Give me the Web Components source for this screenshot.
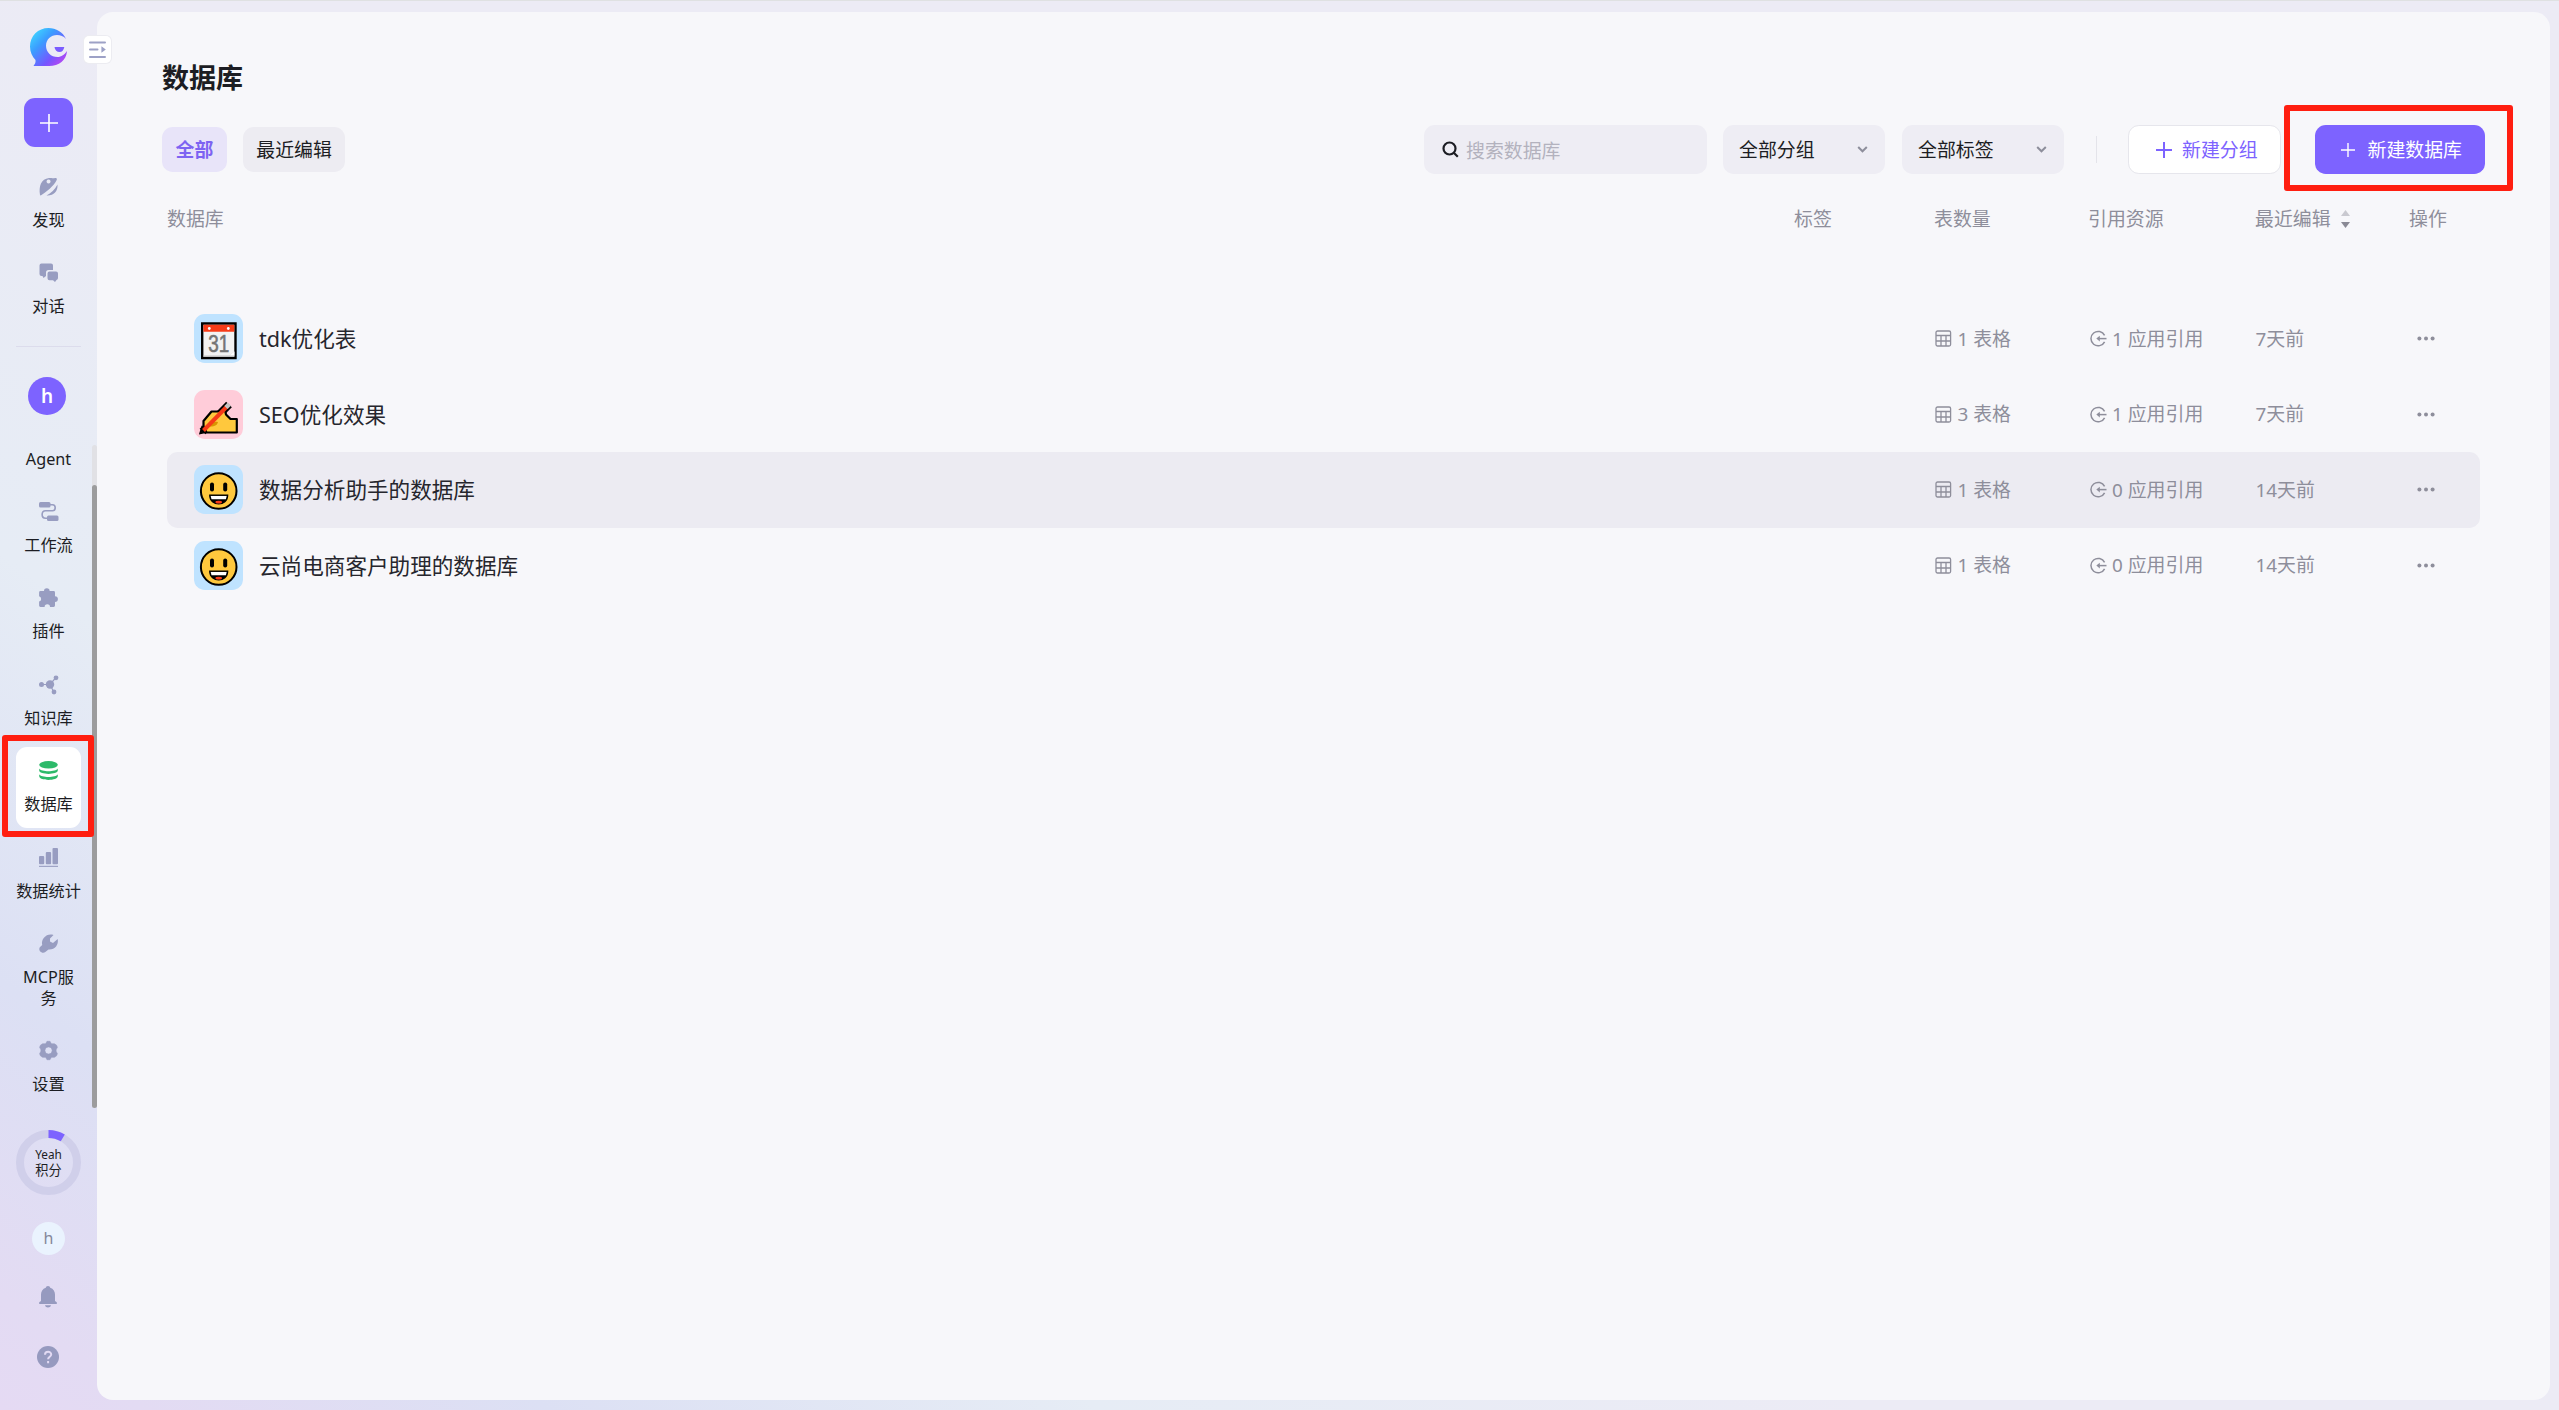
<!DOCTYPE html>
<html lang="zh-CN">
<head>
<meta charset="UTF-8">
<title>数据库</title>
<style>
  html, body {
    margin: 0;
    height: 100%;
    overflow: hidden;
    background: #ecebf5;
    color: #1c1d23;
    font-family: "Noto Sans", "Noto Sans CJK SC", sans-serif;
    font-size: 18.9px;
  }
</style>
</head>
<body>
<app-shell>
  <side-bar slot="side"></side-bar>
  <database-page></database-page>
</app-shell>

<script>
const icons = {
  explore: '<path fill-rule="evenodd" d="M1 18C-.3 9 2 2 10 1c3 0 4 .4 6 0 1.500-.4 2.300.4 1.700 2C15 9 7 15 2.500 18 2 18.500 1.200 18.600 1 18zM9.500 2.500a2 2 0 1 0 .1 0z"/><path d="M18.500 7.500c.5 7-4 11.500-11 11C12 16 16 12.500 18.500 7.500z"/>',
  chat: '<path d="M2.500.5h9.500a2 2 0 0 1 2 2V7H9.500A2.500 2.500 0 0 0 7 9.500V13l-2.500 2-1-2H2.500a2 2 0 0 1-2-2V2.500a2 2 0 0 1 2-2z"/><path d="M10.500 8.500H17a2 2 0 0 1 2 2V15a2 2 0 0 1-1.500 2L16 19l-2-1.700h-3.500a2 2 0 0 1-2-2v-4.800a2 2 0 0 1 2-2z"/>',
  flow: '<rect x="0" y="0" width="11.500" height="5.500" rx="1.500"/><rect x="8" y="13.500" width="11.500" height="5.500" rx="1.500"/><path d="M11 2.700h2.500c3.600 0 3.600 6 0 6h-7c-4.500 0-4.500 7.500 0 7.500H9" fill="none" stroke="currentColor" stroke-width="1.600"/>',
  plugin: '<path d="M1.500 3H5a2.800 2.800 0 0 1 5.600 0h4a1.400 1.400 0 0 1 1.400 1.400v3.800a2.900 2.900 0 0 1 0 5.800v3.600a1.400 1.400 0 0 1-1.400 1.400H11a2.700 2.700 0 0 0-5.400 0H1.500A1.400 1.400 0 0 1 .1 17.600v-4a2.800 2.800 0 0 0 0-5.400V4.400A1.400 1.400 0 0 1 1.500 3z"/>',
  knowledge: '<circle cx="2.500" cy="9.500" r="2.500"/><circle cx="11" cy="9.500" r="4.200"/><circle cx="17" cy="2.800" r="2.400"/><circle cx="15" cy="17" r="2.400"/><path d="M2 9.500h9l6-7M11 9.500l4 8" fill="none" stroke="currentColor" stroke-width="1.200"/>',
  database: '<ellipse cx="9.500" cy="3.800" rx="9.300" ry="3.700"/><path d="M.2 7.600c2 3.600 16.600 3.600 18.600 0v2C18.800 14 .2 14 .2 9.600zM.2 13.200c2 3.600 16.600 3.600 18.600 0v1.800c0 5.200-18.600 5.200-18.600 0z"/>',
  stats: '<rect x="0" y="8" width="5.200" height="8.300" rx="1"/><rect x="6.800" y="4" width="5.300" height="12.300" rx="1"/><rect x="13.500" y="0" width="5.500" height="16.300" rx="1"/><rect x="0" y="17.800" width="19" height="1.100"/>',
  wrench: '<path d="M14.500.9 11 4.600v3l3 1.400 4.700-4c1.200 6-3 11-9.200 10.500L6.300 18c-2.500 2.300-7.600-.9-5.500-4.800L3.200 11C1.800 4.500 8-1.300 14.500.9z"/>',
  gear: '<path fill-rule="evenodd" d="M8 .3h3l1.400 2.500h3L17.400 4l1 2.200-1.300 2.600v1.400l1.300 2.600-1 2.200-2 1.300h-3L11 18.700H8l-1.400-2.400h-3L1.600 15l-1-2.200 1.300-2.600V8.800L.6 6.200 1.600 4l2-1.200h3zM9.500 5.900a3.600 3.600 0 1 0 .1 0z" stroke="currentColor" stroke-linejoin="round" stroke-width=".6"/>'
};

function svg(body, size, box) {
  return `<svg width="${size}" height="${size}" viewBox="0 0 ${box || 19} ${box || 19}" fill="currentColor">${body}</svg>`;
}

// every component renders its own markup and styles in an open root
class BaseElement extends HTMLElement {
  connectedCallback() {
    const root = this.attachShadow({ mode: 'open' });
    root.innerHTML = this.render();
  }
}

class AppShell extends BaseElement {
  render() {
    return `
      <style>
        :host {
          display: grid;
          grid-template-columns: 97px 1fr;
          height: 1410px;
          box-sizing: border-box;
          border-top: 1px solid #dfe1e2;
          padding: 0 9px 0 0;
          background: linear-gradient(38deg, #e5daf3 0, #e3dbf3 90px, #dce0f4 339px, #e6ecf5 677px, #ecebf5 1150px);
        }
        main {
          background: #f7f7fa;
          border-radius: 16px;
          margin: 11px 0 10px;
          min-width: 0;
        }
      </style>
      <slot name="side"></slot>
      <main><slot></slot></main>`;
  }
}

class NavItem extends BaseElement {
  render() {
    const name = this.getAttribute('icon');
    return `
      <style>
        :host {
          display: flex;
          flex-direction: column;
          align-items: center;
          box-sizing: border-box;
          width: 65px;
          min-height: 81px;
          padding-top: 14px;
          margin-bottom: 5.4px;
          border-radius: 11px;
          color: #989dc1;
          flex: none;
        }
        :host([active]) { background: #fff; color: #2dba6a; }
        .label {
          margin: 14px 0 12px;
          width: 52px;
          font-size: 16.2px;
          line-height: 21.4px;
          color: #1c1d23;
          text-align: center;
        }
        .label.wide { width: 66px; white-space: nowrap; }
        svg, i { display: block; width: 19px; height: 19px; overflow: visible; }
      </style>
      ${name ? svg(icons[name], 19) : '<i></i>'}
      <div class="label ${this.hasAttribute('wide') ? 'wide' : ''}"><slot></slot></div>`;
  }
}

class SideBar extends BaseElement {
  render() {
    return `
      <style>
        :host {
          display: flex;
          flex-direction: column;
          align-items: center;
          position: relative;
          height: 1409px;
          width: 97px;
        }
        .logo { display: block; margin: 27px 0 0; }
        .add {
          display: grid;
          place-items: center;
          width: 49px;
          height: 49px;
          margin: 32px 0 16px;
          border-radius: 11px;
          background: #7d63ff;
        }
        .line { width: 65px; height: 1px; background: #dcdcec; margin: 10px 0 30px; flex: none; }
        .team {
          display: grid;
          place-items: center;
          width: 38px;
          height: 38px;
          margin: 0 3px 30px 0;
          border-radius: 50%;
          background: #7d63ff;
          color: #fff;
          font-size: 19px;
          font-weight: 600;
          flex: none;
        }
        .scroll {
          display: flex;
          justify-content: center;
          position: relative;
          width: 97px;
          height: 663px;
          overflow: hidden;
          flex: none;
        }
        .list { display: flex; flex-direction: column; margin-top: -43.200px; }
        .track { position: absolute; right: 0; top: 0; width: 5px; height: 663px; border-radius: 3px; background: #e1e1e5; }
        .thumb { margin-top: 40px; height: 623px; border-radius: 3px; background: #9c9c9d; }
        .ring {
          display: grid;
          place-items: center;
          position: relative;
          width: 65px;
          height: 65px;
          margin-top: 22px;
          flex: none;
        }
        .ring > * { grid-area: 1 / 1; }
        .points {
          display: flex;
          flex-direction: column;
          align-items: center;
          gap: 4px;
          font-size: 13.2px;
          line-height: 13px;
        }
        .points span:first-child { font-size: 11.800px; line-height: 12px; }
        .user {
          display: grid;
          place-items: center;
          width: 33px;
          height: 33px;
          margin: 27px 0 31px;
          border-radius: 50%;
          background: #eaf3fe;
          color: #85889a;
          font-size: 16px;
          flex: none;
        }
        .foot { display: block; margin-right: 1px; color: #969abf; flex: none; }
        .toggle {
          position: absolute;
          left: 84px;
          top: 35px;
          width: 27px;
          height: 27px;
          border-radius: 5px;
          background: #fff;
          box-shadow: 0 0 0 1px #ececf1;
          z-index: 2;
        }
        .mark {
          position: absolute;
          left: 1.500px;
          top: 734px;
          width: 92.500px;
          height: 102px;
          box-sizing: border-box;
          border: 6px solid #ff1e10;
          border-radius: 3px;
          z-index: 3;
        }
      </style>
      <svg class="logo" width="37" height="38" viewBox="0 0 37 38">
        <defs>
          <linearGradient id="g" x1="0" y1="0" x2="1" y2="1">
            <stop offset=".1" stop-color="#3fd3ff"/><stop offset=".35" stop-color="#3b9dff"/>
            <stop offset=".68" stop-color="#7655ff"/><stop offset=".85" stop-color="#a84bf5"/>
          </linearGradient>
        </defs>
        <path fill="url(#g)" d="M36 11C33 4 26 0 18.500 0 8 0 0 8 0 18.500c0 5.500 2.200 10 5.500 13.500C6 35 4.500 36.500 3.500 38H19c10 0 17.500-6 18-15-2.500 3.500-5.500 6-9.500 6-6.500 0-11.500-5-11.500-11.300C16 11.500 21 7 27 7c3.500 0 6.500 1 9 4z"/>
        <path fill="#7a5cff" d="M24.500 19h9.800c-.5 3-2.300 5-4.800 5s-4.700-2-5-5z"/>
      </svg>
      <div class="add"><svg width="18" height="18" stroke="#fff" stroke-width="1.600"><path d="M9 0v18M0 9h18"/></svg></div>
      <nav-item icon="explore">发现</nav-item>
      <nav-item icon="chat">对话</nav-item>
      <div class="line"></div>
      <div class="team">h</div>
      <div class="scroll">
        <div class="list">
          <nav-item>Agent</nav-item>
          <nav-item icon="flow">工作流</nav-item>
          <nav-item icon="plugin">插件</nav-item>
          <nav-item icon="knowledge">知识库</nav-item>
          <nav-item icon="database" active>数据库</nav-item>
          <nav-item icon="stats" wide>数据统计</nav-item>
          <nav-item icon="wrench">MCP服务</nav-item>
          <nav-item icon="gear">设置</nav-item>
        </div>
        <div class="track"><div class="thumb"></div></div>
      </div>
      <div class="ring">
        <svg width="65" height="65" fill="none" stroke-width="8">
          <circle cx="32.500" cy="32.500" r="28.500" stroke="#d0cfea"/>
          <path d="M32.500 4A28.500 28.500 0 0 1 46.800 7.900" stroke="#7d63ff"/>
        </svg>
        <div class="points"><span>Yeah</span><span>积分</span></div>
      </div>
      <div class="user">h</div>
      <svg class="foot" width="18" height="22" viewBox="0 0 18 22" fill="currentColor">
        <path d="M9 0c1.300 0 2 .8 2.200 1.700C14.500 2.800 16 5.500 16 8.500V15l1.800 1.200V18H.2v-1.800L2 15V8.500c0-3 1.500-5.700 4.800-6.800C7 .8 7.700 0 9 0zM6 19.300h6c-.5 3-5.500 3-6 0z"/>
      </svg>
      <svg class="foot" style="margin-top:38px" width="22" height="22" viewBox="0 0 22 22">
        <circle cx="11" cy="11" r="11" fill="currentColor"/>
        <path d="M8 8.800c0-4 6.200-3.800 6.200-.3 0 2.300-3.100 2.300-3.100 4.800M11.100 15v2.200" fill="none" stroke="#e2daf3" stroke-width="2"/>
      </svg>
      <div class="toggle">
        <svg width="27" height="27" fill="none" stroke="#9da1c6" stroke-width="2" stroke-linecap="round">
          <path d="M6 6.500h15M6 13.500h7.500M6 21h15"/><path d="M18 11.500v4l2.800-2z" fill="#9da1c6" stroke-width="1.200"/>
        </svg>
      </div>
      <div class="mark"></div>`;
  }
}

class FilterTab extends BaseElement {
  render() {
    return `
      <style>
        :host {
          display: flex;
          align-items: center;
          box-sizing: border-box;
          height: 45px;
          padding: 0 13.500px 2px;
          border-radius: 10.8px;
          background: #edecf2;
        }
        :host([active]) { background: #e8e4f9; color: #7d63f2; font-weight: 700; }
      </style>
      <slot></slot>`;
  }
}

class SelectBox extends BaseElement {
  render() {
    return `
      <style>
        :host {
          display: flex;
          align-items: center;
          justify-content: space-between;
          box-sizing: border-box;
          width: 162px;
          height: 49px;
          padding: 0 17px 0 16px;
          border-radius: 10.8px;
          background: #eeedf4;
        }
        span { margin-top: -2px; }
      </style>
      <span><slot></slot></span>
      <svg width="11" height="7" fill="none" stroke="#8d8e9b" stroke-width="2"><path d="M1.200 1 5.500 5.300 9.800 1"/></svg>`;
  }
}

class ActionButton extends BaseElement {
  render() {
    const primary = this.hasAttribute('primary');
    return `
      <style>
        :host {
          display: flex;
          align-items: center;
          box-sizing: border-box;
          gap: 10px;
          width: 153px;
          height: 49px;
          padding-left: 27px;
          border: 1px solid #e6e6ec;
          border-radius: 10.8px;
          background: #fff;
          color: #7d63ff;
        }
        :host([primary]) { width: 170px; gap: 13px; padding-left: 25.500px; border: 0; background: #7d63ff; color: #fff; }
        span { margin-top: -2px; }
      </style>
      ${primary
        ? '<svg width="14" height="14" stroke="currentColor" stroke-width="1.400"><path d="M7 0v14M0 7h14"/></svg>'
        : '<svg width="16" height="16" stroke="currentColor" stroke-width="2"><path d="M8 0v16M0 8h16"/></svg>'}
      <span><slot></slot></span>`;
  }
}

const emoji = {
  calendar: `
    <path d="M8.200 9.500h33.300v34.500H8.200z" fill="#f2f2f2" stroke="#000" stroke-width="2.400"/>
    <path d="M9.400 10.700h30.900v7H9.400z" fill="#f73b18"/>
    <circle cx="15.300" cy="14.500" r="1.400" fill="#fff"/><circle cx="34.300" cy="14.500" r="1.400" fill="#fff"/>
    <path d="M9.400 41.500h26l5-4v5.300h-31z" fill="#c4c4c4"/><path d="M35.500 41.500l4.800-4v4z" fill="#fff"/>
    <text x="24.800" y="38" font-family="Liberation Sans" font-size="24" stroke="#747474" stroke-width=".6" text-anchor="middle" textLength="21" lengthAdjust="spacingAndGlyphs" fill="#747474">31</text>`,
  writing: `
    <path d="M8.500 41.500 35 14.500" stroke="#000" stroke-width="8"/>
    <path d="M6 43.500 8 37l5 5z" stroke="#000" stroke-width="1.500"/>
    <path d="M12.500 42.500 9.500 36v-5l8-9.500h6.500l7-1.500 1 4.500 4.500 4.500h6.300v13.500z" fill="#ffc83d" stroke="#000" stroke-width="2.200" stroke-linejoin="round"/>
    <path d="M13 36.500c2 0 10 1 11-4.500-4-1-8 .5-11 4.500z" fill="#d99500"/>
    <path d="M9.500 40.500 33 16.500" stroke="#f73b18" stroke-width="4"/>
    <path d="M32 17.500l3.300-3.400" stroke="#c4c4c4" stroke-width="4.500"/>`,
  smile: `
    <circle cx="24.700" cy="26" r="17.800" fill="#ffc83d" stroke="#000" stroke-width="2"/>
    <rect x="16" y="17.500" width="4" height="9" rx="2"/><rect x="29.200" y="17.500" width="4" height="9" rx="2"/>
    <path d="M15.700 30.200h18c0 11.500-18 11.500-18 0z" stroke="#000" stroke-width="1.200"/>
    <path d="M16.700 31h16l-.8 3.200H17.500z" fill="#fff"/><ellipse cx="24.700" cy="37.200" rx="3.300" ry="1.400" fill="#f73b18"/>`
};

class DatabaseRow extends BaseElement {
  render() {
    const kind = this.getAttribute('emoji');
    return `
      <style>
        :host {
          display: grid;
          grid-template-columns: 1768px 154.500px 166px 161px 1fr;
          align-items: center;
          box-sizing: border-box;
          height: 75.500px;
          border-radius: 10.8px;
          color: #8e8e9b;
        }
        :host([active]) { background: #ecebf2; }
        div { display: flex; align-items: center; white-space: nowrap; }
        .name { padding-left: 27px; gap: 16px; font-size: 21.6px; color: #26262d; }
        .tile { width: 49px; height: 49px; border-radius: 10.8px; background: #bfe3ff; }
        .tile.writing { background: #ffccd9; }
        .meta { gap: 5.500px; }
        span { margin-top: -2px; }
        svg { flex: none; }
      </style>
      <div class="name">
        <svg class="tile ${kind}" viewBox="0 0 49 49">${emoji[kind]}</svg>
        <span><slot></slot></span>
      </div>
      <div class="meta">
        <svg width="17" height="17" fill="none" stroke="currentColor" stroke-width="1.300">
          <rect x="1" y="1" width="14.600" height="15" rx="1.500"/><path d="M1 5.500h15M1 11h15M6 5.500V16M11 5.500V16"/>
        </svg>
        <span>${this.getAttribute('tables')} 表格</span>
      </div>
      <div class="meta">
        <svg width="17" height="17" fill="none" stroke="currentColor" stroke-width="1.500">
          <path d="M14.600 5.400A7.200 7.200 0 1 0 14.600 11.800"/><path d="M16.500 8.600H8"/><path d="M9.800 5.800v5.600L6.300 8.600z" fill="currentColor" stroke="none"/>
        </svg>
        <span>${this.getAttribute('refs')} 应用引用</span>
      </div>
      <div><span>${this.getAttribute('edited')}</span></div>
      <div><svg width="18" height="5" fill="currentColor"><circle cx="2.400" cy="2.500" r="2"/><circle cx="9" cy="2.500" r="2"/><circle cx="15.600" cy="2.500" r="2"/></svg></div>`;
  }
}

class DatabasePage extends BaseElement {
  render() {
    return `
      <style>
        :host { display: block; padding: 44px 0 0 65px; }
        h1 { margin: 0; font-size: 27px; line-height: 44px; font-weight: 700; }
        .bar { display: flex; align-items: center; height: 49px; margin-top: 25px; }
        .bar > * { flex: none; }
        .search {
          display: flex;
          align-items: center;
          gap: 7px;
          box-sizing: border-box;
          width: 283px;
          height: 49px;
          margin: 0 16px 0 auto;
          padding-left: 18px;
          border-radius: 10.8px;
          background: #eeedf4;
          color: #b3b2be;
        }
        .split { width: 1px; height: 27px; margin: 0 31.500px; background: #e4e4ea; }
        .create { position: relative; margin: 0 65px 0 34px; }
        .mark {
          position: absolute;
          left: -31px;
          top: -20px;
          width: 229px;
          height: 86px;
          box-sizing: border-box;
          border: 6px solid #ff1e10;
          border-radius: 3px;
        }
        .head {
          display: grid;
          grid-template-columns: 1627px 140px 154px 167px 154px 1fr;
          height: 28px;
          line-height: 28px;
          margin: 31px 0 68px 5px;
          color: #8e8e9b;
        }
        .sort { display: flex; align-items: center; gap: 10.500px; }
        .rows { width: 2313px; margin-left: 5px; }
      </style>
      <h1>数据库</h1>
      <div class="bar">
        <filter-tab active>全部</filter-tab>
        <filter-tab style="margin-left:16px">最近编辑</filter-tab>
        <div class="search">
          <svg width="17" height="17" fill="none" stroke="#1c1d23" stroke-width="2.200"><circle cx="7.500" cy="7.500" r="6"/><path d="M11.500 11.500l4.300 4.300"/></svg>
          <span>搜索数据库</span>
        </div>
        <select-box>全部分组</select-box>
        <select-box style="margin-left:17px">全部标签</select-box>
        <div class="split"></div>
        <action-button>新建分组</action-button>
        <div class="create">
          <action-button primary>新建数据库</action-button>
          <div class="mark"></div>
        </div>
      </div>
      <div class="head">
        <span>数据库</span><span>标签</span><span>表数量</span><span>引用资源</span>
        <span class="sort">最近编辑
          <svg width="9" height="20"><path d="M0 7 4.500 1 9 7z" fill="#c9c9d0"/><path d="M0 13l4.500 6L9 13z" fill="#8a8a95"/></svg>
        </span>
        <span>操作</span>
      </div>
      <div class="rows">
        <database-row emoji="calendar" tables="1" refs="1" edited="7天前">tdk优化表</database-row>
        <database-row emoji="writing" tables="3" refs="1" edited="7天前">SEO优化效果</database-row>
        <database-row emoji="smile" tables="1" refs="0" edited="14天前" active>数据分析助手的数据库</database-row>
        <database-row emoji="smile" tables="1" refs="0" edited="14天前">云尚电商客户助理的数据库</database-row>
      </div>`;
  }
}

customElements.define('app-shell', AppShell);
customElements.define('nav-item', NavItem);
customElements.define('side-bar', SideBar);
customElements.define('filter-tab', FilterTab);
customElements.define('select-box', SelectBox);
customElements.define('action-button', ActionButton);
customElements.define('database-row', DatabaseRow);
customElements.define('database-page', DatabasePage);
</script>
</body>
</html>
